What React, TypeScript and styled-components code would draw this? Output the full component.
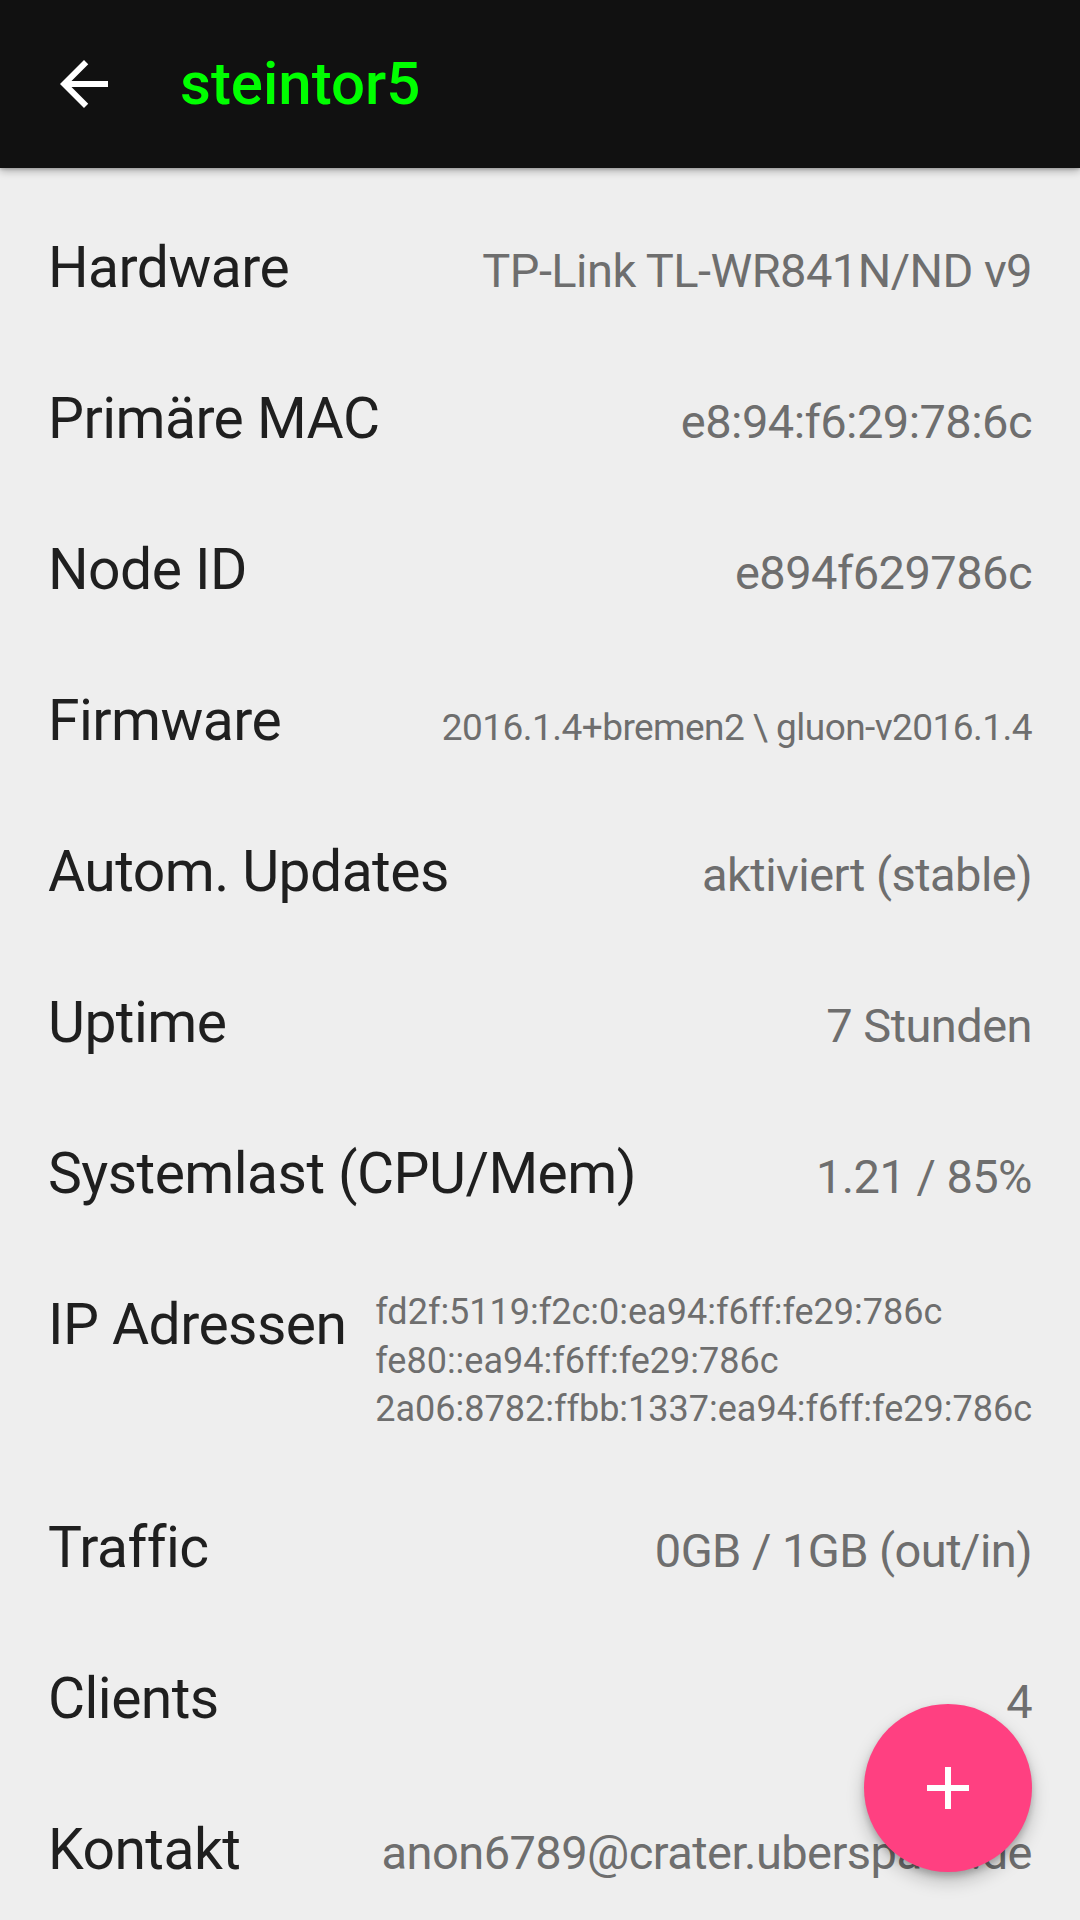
import React from "react";
import styled, { createGlobalStyle } from "styled-components";

const GlobalStyle = createGlobalStyle`
  html, body {
    margin: 0;
    padding: 0;
    background: #eeeeee;
  }
  body {
    font-family: Roboto, "Noto Sans", "Liberation Sans", sans-serif;
  }
`;

const Screen = styled.div`
  width: 1080px;
  height: 1920px;
  overflow: hidden;
  position: relative;
  background: #eeeeee;
  display: flex;
  flex-direction: column;
`;

const Toolbar = styled.header`
  height: 168px;
  flex: 0 0 168px;
  background: #111111;
  display: flex;
  align-items: center;
  padding-left: 48px;
  box-shadow: 0 3px 8px rgba(0, 0, 0, 0.28), 0 1px 3px rgba(0, 0, 0, 0.2);
  position: relative;
  z-index: 2;
`;

const BackButton = styled.button`
  width: 72px;
  height: 72px;
  padding: 0;
  border: none;
  background: transparent;
  display: flex;
  align-items: center;
  justify-content: center;
`;

const Title = styled.h1`
  margin: 0 0 0 60px;
  font-family: Roboto, "Noto Sans", sans-serif;
  font-weight: 500;
  font-size: 60px;
  line-height: 70px;
  color: #00ff00;
`;

const List = styled.div`
  padding-top: 24px;
  display: flex;
  flex-direction: column;
`;

const Row = styled.div<{ $top?: boolean }>`
  display: flex;
  justify-content: space-between;
  align-items: ${(p) => (p.$top ? "flex-start" : "baseline")};
  padding: 42px 48px;
  gap: 28px;
`;

const Label = styled.div`
  font-size: 57px;
  line-height: 67px;
  letter-spacing: -0.55px;
  color: #1f1f1f;
  white-space: nowrap;
  flex-shrink: 0;
`;

const Value = styled.div<{ $size?: number }>`
  font-size: ${(p) => p.$size ?? 47}px;
  line-height: ${(p) => Math.round((p.$size ?? 47) * 1.172)}px;
  letter-spacing: -0.55px;
  color: #6e6e6e;
  white-space: nowrap;
  text-align: right;
`;

const AddressList = styled.div`
  display: flex;
  flex-direction: column;
  gap: 6.5px;
  font-size: 36px;
  line-height: 42px;
  color: #6e6e6e;
  white-space: nowrap;
`;

const Fab = styled.button`
  position: absolute;
  right: 48px;
  bottom: 48px;
  width: 168px;
  height: 168px;
  border-radius: 50%;
  border: none;
  padding: 0;
  background: #ff4081;
  display: flex;
  align-items: center;
  justify-content: center;
  box-shadow: 0 9px 18px rgba(0, 0, 0, 0.22), 0 4px 6px rgba(0, 0, 0, 0.18);
  z-index: 3;
`;

const ArrowIcon = () => (
  <svg width="72" height="72" viewBox="0 0 24 24">
    <path
      fill="#ffffff"
      d="M20 11H7.83l5.59-5.59L12 4l-8 8 8 8 1.41-1.41L7.83 13H20v-2z"
    />
  </svg>
);

const PlusIcon = () => (
  <svg width="72" height="72" viewBox="0 0 24 24">
    <path fill="#ffffff" d="M19 13h-6v6h-2v-6H5v-2h6V5h2v6h6v2z" />
  </svg>
);

type Item = { label: string; value: string; size?: number };

const items: Item[] = [
  { label: "Hardware", value: "TP-Link TL-WR841N/ND v9" },
  { label: "Primäre MAC", value: "e8:94:f6:29:78:6c" },
  { label: "Node ID", value: "e894f629786c" },
  { label: "Firmware", value: "2016.1.4+bremen2 \\ gluon-v2016.1.4", size: 37 },
  { label: "Autom. Updates", value: "aktiviert (stable)" },
  { label: "Uptime", value: "7 Stunden" },
  { label: "Systemlast (CPU/Mem)", value: "1.21 / 85%" },
];

const tail: Item[] = [
  { label: "Traffic", value: "0GB / 1GB (out/in)" },
  { label: "Clients", value: "4" },
  { label: "Kontakt", value: "anon6789@crater.uberspace.de" },
];

const addresses = [
  "fd2f:5119:f2c:0:ea94:f6ff:fe29:786c",
  "fe80::ea94:f6ff:fe29:786c",
  "2a06:8782:ffbb:1337:ea94:f6ff:fe29:786c",
];

export default function App() {
  return (
    <>
      <GlobalStyle />
      <Screen>
        <Toolbar>
          <BackButton aria-label="Zurück">
            <ArrowIcon />
          </BackButton>
          <Title>steintor5</Title>
        </Toolbar>
        <List>
          {items.map((it) => (
            <Row key={it.label}>
              <Label>{it.label}</Label>
              <Value $size={it.size}>{it.value}</Value>
            </Row>
          ))}
          <Row $top>
            <Label>IP Adressen</Label>
            <AddressList>
              {addresses.map((a) => (
                <div key={a}>{a}</div>
              ))}
            </AddressList>
          </Row>
          {tail.map((it) => (
            <Row key={it.label}>
              <Label>{it.label}</Label>
              <Value $size={it.size}>{it.value}</Value>
            </Row>
          ))}
        </List>
        <Fab aria-label="Hinzufügen">
          <PlusIcon />
        </Fab>
      </Screen>
    </>
  );
}
